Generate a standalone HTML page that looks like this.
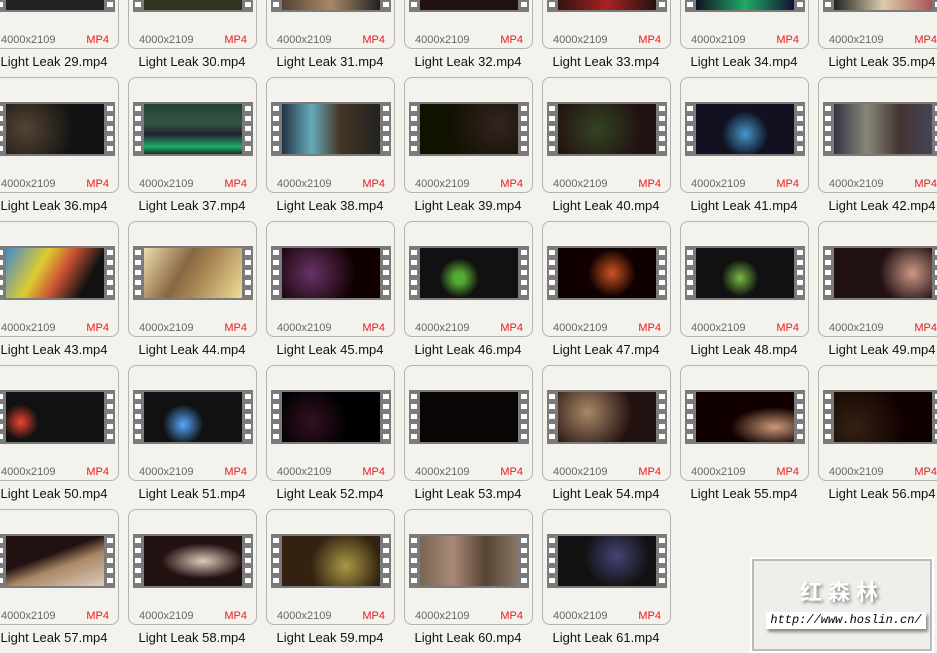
<!DOCTYPE html>
<html><head><meta charset="utf-8"><style>
body{margin:0;width:937px;height:649px;overflow:hidden;background:#f4f2ed;font-family:"Liberation Sans","DejaVu Sans",sans-serif;position:relative}
.card{position:absolute;width:127px;height:114px;border:1px solid #b5b3ae;border-radius:8px;box-sizing:content-box}
.strip{position:absolute;left:4px;top:24px;width:120px;height:54px;background:#7b7b7b}
.img{position:absolute;left:11px;top:2px;width:98px;height:50px;background:#111}
.h{position:absolute;width:6px;height:5px;background:#fff}
.res{position:absolute;left:10px;top:100px;font-size:11px;color:#666;line-height:12px}
.fmt{position:absolute;right:9px;top:100px;font-size:11px;color:#e02020;line-height:12px}
.lbl{position:absolute;width:138px;text-align:center;font-size:13px;color:#111;line-height:15px}
.wm{position:absolute;left:750px;top:557px;width:180px;height:92px;border:2px solid #fff;box-shadow:inset 0 0 0 2px #bbb;background:#f0eee9}
</style></head><body>
<div id="g"></div>
<div class="wm">
<div style="position:absolute;left:0;width:180px;top:16px;text-align:center;font-size:22px;font-weight:bold;color:#fff;letter-spacing:6px;text-shadow:2px 2px 3px #888;font-family:'Noto Sans CJK SC',sans-serif">红森林</div>
<div style="position:absolute;left:14px;top:53px;width:160px;height:17px;background:#fff;box-shadow:2px 3px 3px #888;font-size:12px;font-style:italic;font-family:'Liberation Mono',monospace;line-height:17px;text-align:center;color:#000">http://www.hoslin.cn/</div>
</div>
<script>
var bgs={
29:"#222",30:"#332",31:"linear-gradient(90deg,#543,#a86,#222)",32:"#211",33:"linear-gradient(90deg,#311,#a22,#211)",34:"linear-gradient(90deg,#112,#2a6,#113)",35:"linear-gradient(90deg,#222,#dca,#a55)",
36:"radial-gradient(circle at 20% 50%,#543,#111 60%)",37:"linear-gradient(180deg,#243,#354 40%,#223 60%,#2a6 85%,#132)",38:"linear-gradient(90deg,#234,#6ab 30%,#432 60%,#222)",39:"radial-gradient(circle at 80% 40%,#322,#110 60%)",40:"radial-gradient(circle at 40% 50%,#342,#211 70%)",41:"radial-gradient(circle at 50% 60%,#49c,#112 40%)",42:"linear-gradient(90deg,#334,#887,#433,#445)",
43:"linear-gradient(120deg,#48c,#dc3 35%,#c53 55%,#111 80%)",44:"linear-gradient(120deg,#eda,#864 40%,#a85 60%,#ed9)",45:"radial-gradient(circle at 30% 50%,#636,#100 60%)",46:"radial-gradient(circle at 40% 60%,#5a3 8%,#111 30%),radial-gradient(circle at 70% 50%,#6c5,#111 30%)",47:"radial-gradient(circle at 55% 50%,#c52,#100 40%)",48:"radial-gradient(circle at 45% 60%,#7b4,#111 30%)",49:"radial-gradient(circle at 80% 50%,#c98,#211 40%)",
50:"radial-gradient(circle at 15% 60%,#e43,#111 20%),radial-gradient(circle at 85% 70%,#db2,#111 25%)",51:"radial-gradient(circle at 40% 65%,#5af,#111 30%)",52:"radial-gradient(circle at 30% 60%,#312,#000 50%)",53:"#0a0505",54:"radial-gradient(circle at 30% 40%,#a86,#211 60%)",55:"radial-gradient(ellipse at 80% 70%,#c97,#100 40%)",56:"radial-gradient(circle at 20% 70%,#321,#100 60%)",
57:"linear-gradient(160deg,#211 40%,#a86 60%,#dcb)",58:"radial-gradient(ellipse at 60% 50%,#dcb,#211 50%)",59:"radial-gradient(circle at 65% 60%,#a94,#321 50%)",60:"linear-gradient(90deg,#765,#a87,#543,#876)",61:"radial-gradient(circle at 60% 40%,#447,#111 50%)"};
var h="";
for(var r=0;r<5;r++)for(var c=0;c<7;c++){
 var n=29+r*7+c; if(n>61)continue;
 var x=-10+138*c, y=-67+144*r;
 var holes="";
 for(var k=0;k<5;k++){var hy=4+k*10;holes+='<div class="h" style="left:2px;top:'+hy+'px"></div><div class="h" style="left:112px;top:'+hy+'px"></div>';}
 h+='<div class="card" style="left:'+x+'px;top:'+y+'px"><div class="strip">'+holes+'<div class="img" style="background:'+(bgs[n]||"#222")+'"></div></div><div class="res">4000x2109</div><div class="fmt">MP4</div></div>';
 h+='<div class="lbl" style="left:'+(x-5)+'px;top:'+(y+121)+'px">Light Leak '+n+'.mp4</div>';
}
document.getElementById("g").innerHTML=h;
</script>
</body></html>
